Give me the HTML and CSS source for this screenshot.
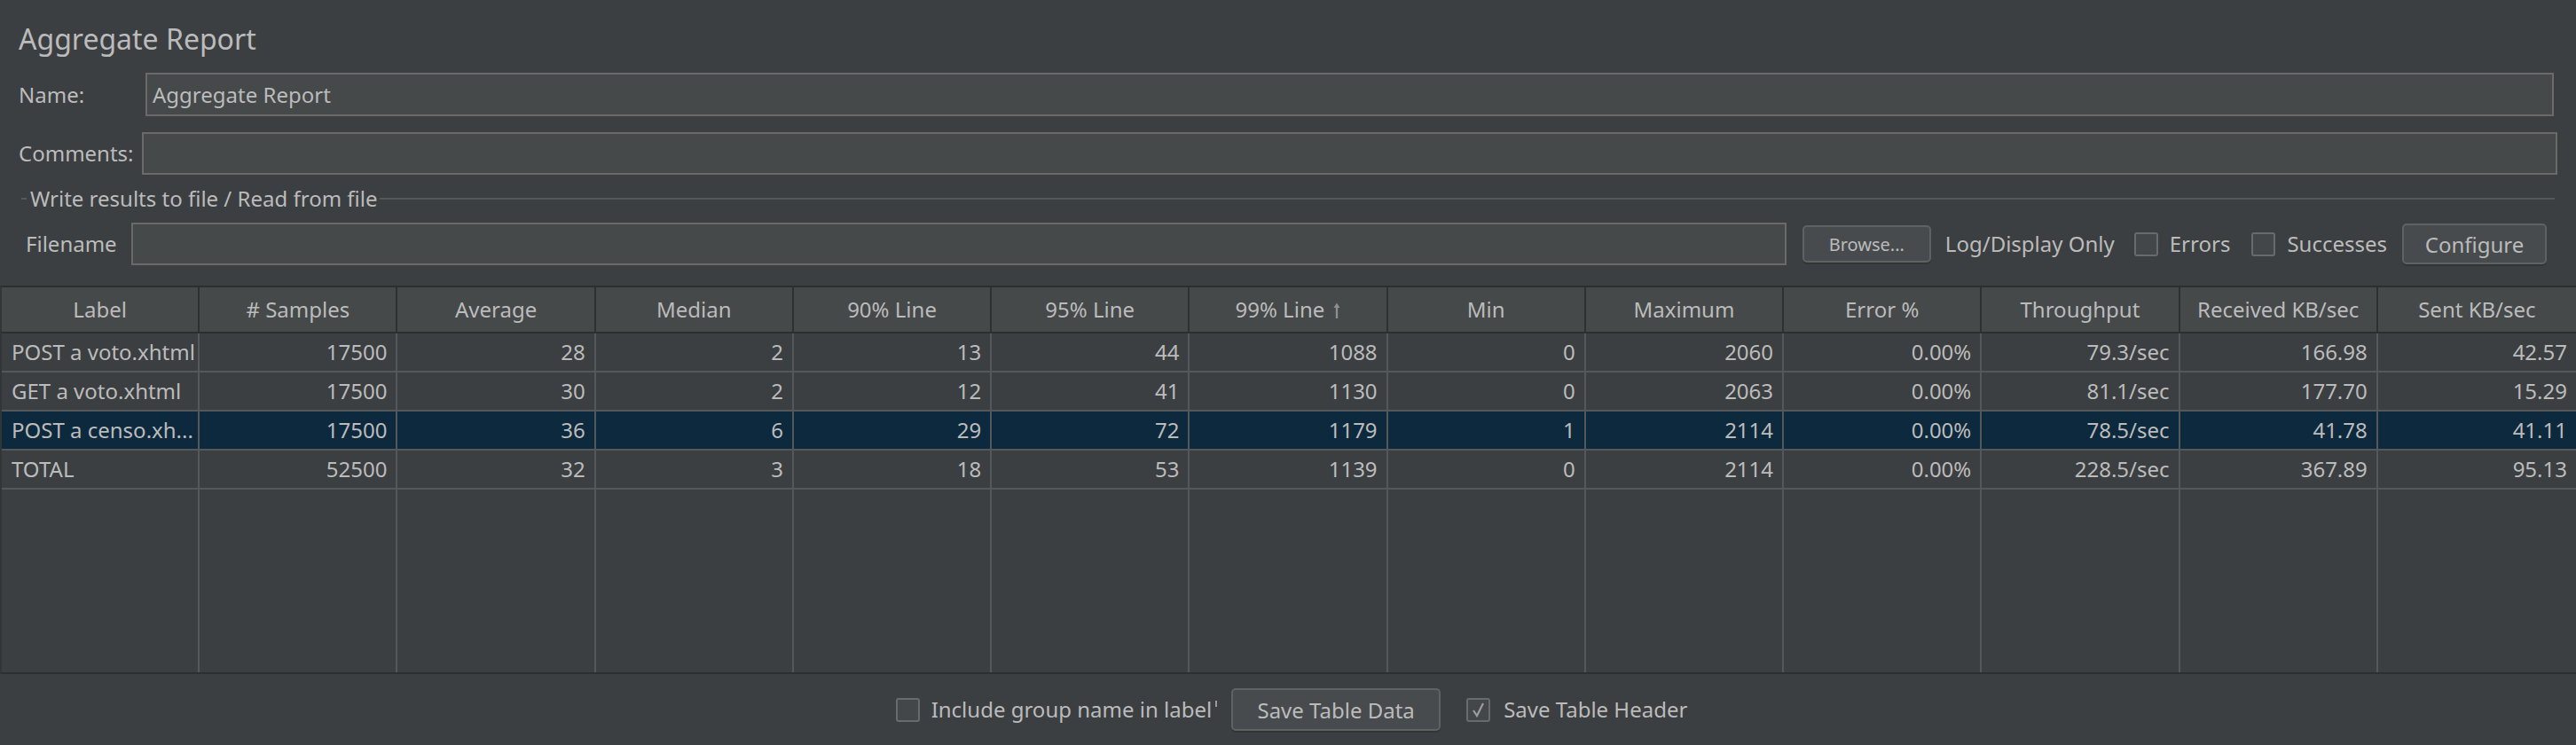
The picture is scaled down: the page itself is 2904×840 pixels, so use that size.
FILE: index.html
```html
<!DOCTYPE html>
<html>
<head>
<meta charset="utf-8">
<title>Aggregate Report</title>
<link rel="stylesheet" href="styles.css">
</head>
<body>
<div class="page">
  <div class="title">Aggregate Report</div>

  <div class="form-row row-name">
    <div class="form-label label-name">Name:</div>
    <div class="field">Aggregate Report</div>
  </div>

  <div class="form-row row-comments">
    <div class="form-label label-comments">Comments:</div>
    <div class="field"></div>
  </div>

  <div class="legend-row">
    <span class="legend-line short"></span>
    <span class="legend-text">Write results to file / Read from file</span>
    <span class="legend-line long"></span>
  </div>

  <div class="file-row">
    <div class="file-label">Filename</div>
    <div class="field file-field"></div>
    <div class="btn btn-browse">Browse...</div>
    <div class="plain-text log-text">Log/Display Only</div>
    <div class="checkbox cb-errors"></div>
    <div class="plain-text cb-label">Errors</div>
    <div class="checkbox cb-success"></div>
    <div class="plain-text cb-label">Successes</div>
    <div class="btn btn-configure">Configure</div>
  </div>

  <div class="table">
    <div class="thead">
      <div class="th">Label</div>
      <div class="th"># Samples</div>
      <div class="th">Average</div>
      <div class="th">Median</div>
      <div class="th">90% Line</div>
      <div class="th">95% Line</div>
      <div class="th">99% Line <svg class="sort-arrow" width="10" height="20" viewBox="0 0 10 20"><path d="M5 5 V19" stroke="#8e8e8e" stroke-width="2.4"/><path d="M1.5 7 L5 1.5 L8.5 7 Z" fill="#8e8e8e"/></svg></div>
      <div class="th">Min</div>
      <div class="th">Maximum</div>
      <div class="th">Error %</div>
      <div class="th">Throughput</div>
      <div class="th">Received KB/sec</div>
      <div class="th last">Sent KB/sec</div>
    </div>

    <div class="tr">
      <div class="td lbl">POST a voto.xhtml</div>
      <div class="td">17500</div><div class="td">28</div><div class="td">2</div><div class="td">13</div><div class="td">44</div><div class="td">1088</div><div class="td">0</div><div class="td">2060</div><div class="td">0.00%</div><div class="td">79.3/sec</div><div class="td">166.98</div><div class="td last">42.57</div>
    </div>
    <div class="tr">
      <div class="td lbl">GET a voto.xhtml</div>
      <div class="td">17500</div><div class="td">30</div><div class="td">2</div><div class="td">12</div><div class="td">41</div><div class="td">1130</div><div class="td">0</div><div class="td">2063</div><div class="td">0.00%</div><div class="td">81.1/sec</div><div class="td">177.70</div><div class="td last">15.29</div>
    </div>
    <div class="tr selected">
      <div class="td lbl">POST a censo.xh...</div>
      <div class="td">17500</div><div class="td">36</div><div class="td">6</div><div class="td">29</div><div class="td">72</div><div class="td">1179</div><div class="td">1</div><div class="td">2114</div><div class="td">0.00%</div><div class="td">78.5/sec</div><div class="td">41.78</div><div class="td last">41.11</div>
    </div>
    <div class="tr">
      <div class="td lbl">TOTAL</div>
      <div class="td">52500</div><div class="td">32</div><div class="td">3</div><div class="td">18</div><div class="td">53</div><div class="td">1139</div><div class="td">0</div><div class="td">2114</div><div class="td">0.00%</div><div class="td">228.5/sec</div><div class="td">367.89</div><div class="td last">95.13</div>
    </div>

    <div class="filler">
      <div class="fc"></div><div class="fc"></div><div class="fc"></div><div class="fc"></div><div class="fc"></div><div class="fc"></div><div class="fc"></div><div class="fc"></div><div class="fc"></div><div class="fc"></div><div class="fc"></div><div class="fc"></div><div class="fc last"></div>
    </div>
  </div>

  <div class="bottom-bar">
    <div class="checkbox"></div>
    <div class="plain-text include-text">Include group name in label</div>
    <span class="clip-mark"></span>
    <div class="btn btn-save">Save Table Data</div>
    <div class="checkbox checked"><svg width="23" height="23" viewBox="0 0 23 23"><path d="M6 12 L10 18 L17 4" fill="none" stroke="#9c9c9c" stroke-width="2.2"/></svg></div>
    <div class="plain-text header-text">Save Table Header</div>
  </div>
</div>
</body>
</html>
```

FILE: styles.css
```css
html, body {
  margin: 0;
  padding: 0;
}

body {
  background: #3c3f41;
  color: #bbbbbb;
  font-family: "Noto Sans", "Open Sans", sans-serif;
  font-size: 24px;
}

.page {
  width: 2904px;
  height: 840px;
  overflow: hidden;
  display: flex;
  flex-direction: column;
}

.title {
  height: 82px;
  box-sizing: border-box;
  padding: 22px 0 0 21px;
  font-size: 32px;
  line-height: 44px;
}

.form-row {
  display: flex;
  align-items: center;
  padding-left: 21px;
}

.row-name {
  height: 49px;
  padding-right: 25px;
  margin-bottom: 18px;
}

.row-comments {
  height: 48px;
  padding-right: 21px;
}

.form-label {
  flex: none;
  line-height: 32px;
}

.label-name {
  width: 143px;
}

.label-comments {
  width: 139px;
}

.field {
  flex: 1;
  align-self: stretch;
  box-sizing: border-box;
  background: #45494a;
  border: 2px solid #6a6a6a;
  padding-left: 6px;
  line-height: 45px;
  white-space: nowrap;
  overflow: hidden;
}

.legend-row {
  display: flex;
  align-items: center;
  height: 32px;
  margin-top: 11px;
  padding-left: 24px;
  padding-right: 24px;
}

.legend-line {
  height: 2px;
  background: #54585a;
}

.legend-line.short {
  width: 6px;
  margin-right: 4px;
}

.legend-line.long {
  flex: 1;
  margin-left: 2px;
}

.legend-text {
  line-height: 32px;
  white-space: nowrap;
}

.file-row {
  display: flex;
  align-items: center;
  height: 48px;
  margin-top: 11px;
  padding-left: 29px;
  padding-right: 33px;
}

.file-label {
  margin-right: 16px;
  line-height: 32px;
}

.file-field {
  margin-right: 18px;
}

.plain-text {
  line-height: 32px;
  white-space: nowrap;
}

.btn {
  box-sizing: border-box;
  display: flex;
  align-items: center;
  justify-content: center;
  background: #474b4d;
  border: 2px solid #5f6263;
  border-radius: 5px;
  box-shadow: 0 2px 0 #323536;
  white-space: nowrap;
}

.btn-browse {
  width: 145px;
  height: 42px;
  font-size: 20px;
  margin-right: 16px;
}

.log-text {
  margin-right: 22px;
}

.checkbox {
  box-sizing: border-box;
  width: 27px;
  height: 27px;
  border: 2px solid #686a6b;
  border-radius: 3px;
  background: #43474a;
  flex: none;
  display: flex;
  align-items: center;
  justify-content: center;
}

.cb-errors,
.cb-success {
  margin-right: 13px;
}

.cb-label {
  margin-right: 24px;
}

.cb-label:last-of-type {
  margin-right: 0;
}

.btn-configure {
  width: 163px;
  height: 46px;
  margin-left: -7px;
}

.table {
  margin-top: 23px;
  height: 438px;
  box-sizing: border-box;
  border-top: 2px solid #2c2e30;
  border-bottom: 2px solid #2c2e30;
  border-left: 2px solid #333638;
  display: flex;
  flex-direction: column;
}

.thead,
.tr,
.filler {
  display: grid;
  grid-template-columns: repeat(13, 1fr);
}

.thead {
  height: 52px;
  box-sizing: border-box;
  background: #45494a;
  border-bottom: 2px solid #2c2e30;
}

.th {
  box-sizing: border-box;
  border-right: 2px solid #2e3132;
  text-align: center;
  line-height: 50px;
  white-space: nowrap;
}

.sort-arrow {
  vertical-align: -2px;
  margin-left: 2px;
}

.tr {
  height: 44px;
  box-sizing: border-box;
  border-bottom: 2px solid #54585a;
}

.tr.selected {
  background: #0d293e;
}

.td {
  box-sizing: border-box;
  border-right: 2px solid #54585a;
  text-align: right;
  padding-right: 10px;
  line-height: 42px;
  white-space: nowrap;
  overflow: hidden;
}

.td.lbl {
  text-align: left;
  padding-left: 11px;
  padding-right: 0;
}

.filler {
  flex: 1;
}

.fc {
  border-right: 2px solid #54585a;
}

.th.last,
.td.last,
.fc.last {
  border-right: none;
}

.bottom-bar {
  height: 80px;
  display: flex;
  align-items: center;
  justify-content: center;
  padding-left: 8px;
}

.include-text {
  margin-left: 13px;
}

.clip-mark {
  width: 2px;
  height: 7px;
  background: #9a9a9a;
  margin-left: 4px;
  margin-right: 16px;
  align-self: center;
  transform: translateY(-7px);
}

.btn-save {
  width: 236px;
  height: 48px;
  margin-right: 29px;
}

.header-text {
  margin-left: 15px;
}
```
